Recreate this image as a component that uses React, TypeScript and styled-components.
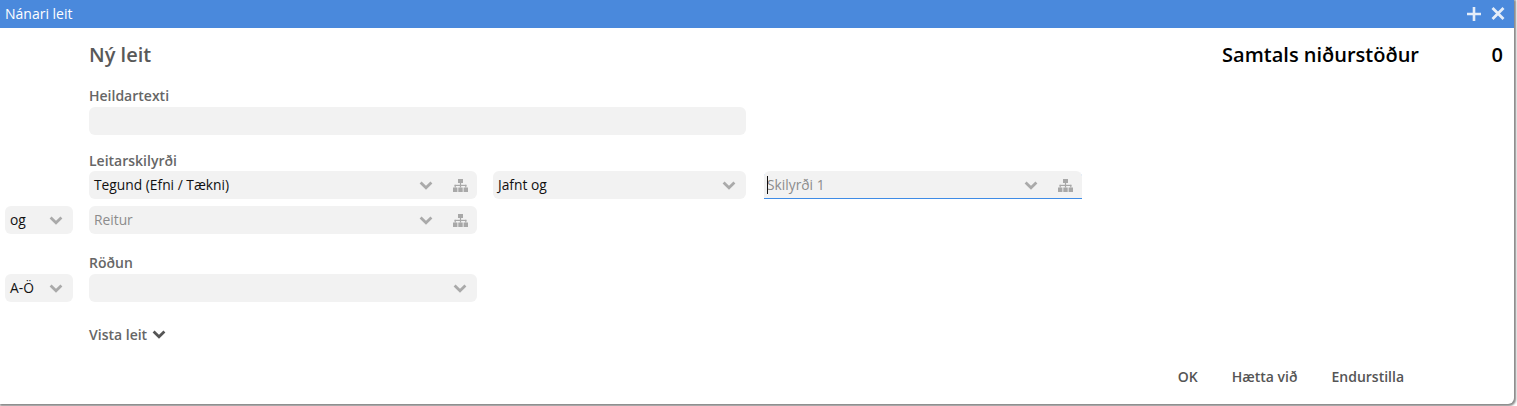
import React from "react";
import styled, { createGlobalStyle } from "styled-components";

const Global = createGlobalStyle`
  html, body { margin: 0; padding: 0; background: #fff; }
  body { font-family: "Open Sans", "Liberation Sans", sans-serif; }
  * { box-sizing: border-box; }
`;

const Page = styled.div`
  width: 1517px;
  height: 406px;
  overflow: hidden;
  background: #fff;
`;

const Dialog = styled.div`
  width: 1514px;
  height: 404px;
  background: #fff;
  border-bottom-right-radius: 6px;
  box-shadow: 1px 1px 2px 1px #8a8a8a;
  display: flex;
  flex-direction: column;
`;

const TitleBar = styled.div`
  height: 28px;
  flex: none;
  background: #4a89dc;
  color: #fff;
  font-size: 14px;
  display: flex;
  align-items: center;
  justify-content: space-between;
  padding: 0 9px 1px 5px;
`;

const TitleIcons = styled.div`
  display: flex;
  align-items: center;
  gap: 10px;
  color: #e4edf9;
  svg { display: block; }
`;

const Body = styled.div`
  flex: 1;
  display: flex;
  flex-direction: column;
  padding: 0 11px 0 5px;
`;

const HeaderRow = styled.div`
  display: flex;
  align-items: center;
  justify-content: space-between;
  height: 24px;
  margin-top: 14px;
  padding-left: 84px;
`;

const Heading = styled.div`
  font-size: 20px;
  font-weight: 600;
  color: #595959;
`;

const Totals = styled.div`
  display: flex;
  font-size: 20px;
  font-weight: 600;
  color: #000;
`;

const TotalCount = styled.span`
  width: 84px;
  text-align: right;
`;

const FieldLabel = styled.div<{ $top: number }>`
  margin: ${(p) => p.$top}px 0 0 84px;
  font-size: 14px;
  font-weight: 600;
  line-height: 18px;
  height: 18px;
  color: #666;
`;

const Row = styled.div<{ $top?: number }>`
  display: flex;
  margin-top: ${(p) => p.$top ?? 0}px;
  height: 28px;
`;

const Gutter = styled.div`
  width: 84px;
  flex: none;
`;

const Field = styled.div<{ $width: number; $gap?: number; $focused?: boolean }>`
  position: relative;
  width: ${(p) => p.$width}px;
  margin-right: ${(p) => p.$gap ?? 0}px;
  flex: none;
  height: 28px;
  background: #f2f2f2;
  border-radius: 6px;
  display: flex;
  align-items: center;
  padding: 0 5px;
  font-size: 13.8px;
  color: #111;
  ${(p) =>
    p.$focused &&
    `
    padding-left: 3px;
    border-bottom-left-radius: 0;
    border-bottom-right-radius: 0;
    box-shadow: inset 0 -1px 0 #3f8ce6;
  `}
`;

const Value = styled.span<{ $muted?: boolean }>`
  flex: 1;
  margin-top: -2px;
  color: ${(p) => (p.$muted ? "#8c8c8c" : "#111")};
  white-space: nowrap;
`;

const Caret = styled.i`
  position: absolute;
  left: 3px;
  top: 5px;
  width: 1px;
  height: 18px;
  background: #111;
`;

const ChevronSvg = styled.svg<{ $end?: boolean; $dark?: boolean }>`
  flex: none;
  width: 14px;
  height: 9px;
  margin-top: 1px;
  margin-right: ${(p) => (p.$end ? 5 : 0)}px;
  color: ${(p) => (p.$dark ? "#555" : "#aaa")};
`;

const Chevron = ({ end, dark }: { end?: boolean; dark?: boolean }) => (
  <ChevronSvg $end={end} $dark={dark} viewBox="0 0 14 9">
    <path d="M1.6 1.6 L7 6.8 L12.4 1.6" fill="none" stroke="currentColor" strokeWidth="2.8" />
  </ChevronSvg>
);

const TreeSvg = styled.svg`
  flex: none;
  width: 15px;
  height: 13px;
  margin-left: 20px;
  margin-right: 4px;
  color: #a8a8a8;
`;

const Tree = () => (
  <TreeSvg viewBox="0 0 15 13">
    <g fill="currentColor">
      <rect x="5" y="0" width="5" height="4" />
      <rect x="0" y="8.5" width="4.4" height="4.5" />
      <rect x="5.3" y="8.5" width="4.4" height="4.5" />
      <rect x="10.6" y="8.5" width="4.4" height="4.5" />
      <rect x="6.9" y="4" width="1.2" height="4.5" />
      <rect x="1.6" y="5.8" width="11.8" height="1.2" />
      <rect x="1.6" y="5.8" width="1.2" height="2.7" />
      <rect x="12.2" y="5.8" width="1.2" height="2.7" />
    </g>
  </TreeSvg>
);

const Toggle = styled.div`
  display: flex;
  align-items: center;
  gap: 5px;
  margin: 23px 0 0 84px;
  height: 18px;
  font-size: 14px;
  font-weight: 600;
  color: #666;
`;

const Actions = styled.div`
  display: flex;
  justify-content: flex-end;
  gap: 34px;
  margin-top: 25px;
  padding-right: 99px;
  font-size: 14px;
  font-weight: 600;
  line-height: 18px;
  color: #555;
`;

export default function App() {
  return (
    <Page>
      <Global />
      <Dialog>
        <TitleBar>
          <span>Nánari leit</span>
          <TitleIcons>
            <svg width="14" height="14" viewBox="0 0 14 14">
              <path d="M7 0 V14 M0 7 H14" stroke="currentColor" strokeWidth="2.6" fill="none" />
            </svg>
            <svg width="14" height="13" viewBox="0 0 14 13">
              <path d="M1.5 1 L12.5 12 M12.5 1 L1.5 12" stroke="currentColor" strokeWidth="2.8" fill="none" />
            </svg>
          </TitleIcons>
        </TitleBar>
        <Body>
          <HeaderRow>
            <Heading>Ný leit</Heading>
            <Totals>
              <span>Samtals niðurstöður</span>
              <TotalCount>0</TotalCount>
            </Totals>
          </HeaderRow>
          <FieldLabel $top={21}>Heildartexti</FieldLabel>
          <Row $top={2}>
            <Gutter />
            <Field $width={657} />
          </Row>
          <FieldLabel $top={17}>Leitarskilyrði</FieldLabel>
          <Row $top={1}>
            <Gutter />
            <Field $width={388} $gap={16}>
              <Value>Tegund (Efni / Tækni)</Value>
              <Chevron />
              <Tree />
            </Field>
            <Field $width={253} $gap={18}>
              <Value>Jafnt og</Value>
              <Chevron end />
            </Field>
            <Field $width={318} $focused>
              <Caret />
              <Value $muted>Skilyrði 1</Value>
              <Chevron />
              <Tree />
            </Field>
          </Row>
          <Row $top={7}>
            <Field $width={68} $gap={16}>
              <Value>og</Value>
              <Chevron end />
            </Field>
            <Field $width={388}>
              <Value $muted>Reitur</Value>
              <Chevron />
              <Tree />
            </Field>
          </Row>
          <FieldLabel $top={20}>Röðun</FieldLabel>
          <Row $top={2}>
            <Field $width={68} $gap={16}>
              <Value>A-Ö</Value>
              <Chevron end />
            </Field>
            <Field $width={388}>
              <Value />
              <Chevron end />
            </Field>
          </Row>
          <Toggle>
            Vista leit
            <Chevron dark />
          </Toggle>
          <Actions>
            <span>OK</span>
            <span>Hætta við</span>
            <span>Endurstilla</span>
          </Actions>
        </Body>
      </Dialog>
    </Page>
  );
}
